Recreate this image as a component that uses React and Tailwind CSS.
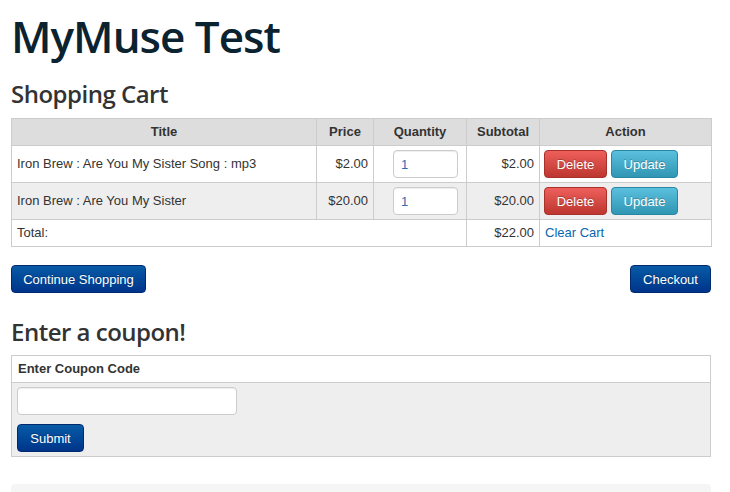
const ITEMS = [
  { title: 'Iron Brew : Are You My Sister Song : mp3', price: '$2.00', qty: '1', subtotal: '$2.00' },
  { title: 'Iron Brew : Are You My Sister', price: '$20.00', qty: '1', subtotal: '$20.00' },
]

const btn = 'h-[28px] rounded-[4px] border text-[13px] text-white leading-none whitespace-nowrap font-["Liberation_Sans",Arial,sans-serif] [text-shadow:0_-1px_0_rgba(0,0,0,0.25)]'
const primary = `${btn} bg-gradient-to-b from-[#0a5ba6] to-[#00348a] border-[#012a6e]`
const danger = `${btn} bg-gradient-to-b from-[#ee5f5b] to-[#bd362f] border-[#a8322b]`
const info = `${btn} bg-gradient-to-b from-[#5bc0de] to-[#2f96b4] border-[#2a87a3]`

const th = 'border border-[#cccccc] bg-[#dddddd] font-bold text-center h-[27px] px-[5px]'
const td = 'border border-[#cccccc] px-[5px]'
const heading = "font-['Open_Sans',sans-serif] font-semibold text-[24px] leading-[30px] tracking-[-0.5px] text-[#333333]"

export default function App() {
  return (
    <div className="w-[730px] bg-white px-[11px] font-['Liberation_Sans',Arial,sans-serif] text-[13px] text-[#333333]">
      <div className="w-[700px]">
        <h1 className="font-['Open_Sans',sans-serif] font-semibold text-[44px] leading-[50px] text-[#0b2230] pt-[11px] tracking-[-1px]">
          MyMuse Test
        </h1>
        <h2 className={`${heading} mt-[18px]`}>Shopping Cart</h2>

        <table className="w-[700px] mt-[9px] border-collapse table-fixed">
          <colgroup>
            <col className="w-[305px]" />
            <col className="w-[57px]" />
            <col className="w-[93px]" />
            <col className="w-[73px]" />
            <col className="w-[172px]" />
          </colgroup>
          <thead>
            <tr>
              <th className={th}>Title</th>
              <th className={th}>Price</th>
              <th className={th}>Quantity</th>
              <th className={th}>Subtotal</th>
              <th className={th}>Action</th>
            </tr>
          </thead>
          <tbody>
            {ITEMS.map((it, i) => (
              <tr key={i} className={i % 2 ? 'bg-[#eeeeee]' : 'bg-white'}>
                <td className={`${td} h-[37px]`}>{it.title}</td>
                <td className={`${td} text-right`}>{it.price}</td>
                <td className={`${td} pl-[19px]`}>
                  <input
                    defaultValue={it.qty}
                    className="block w-[65px] h-[28px] px-[7px] rounded-[4px] border border-[#cccccc] bg-white text-[13px] text-[#2a6fb0] shadow-[inset_0_1px_1px_rgba(0,0,0,0.075)] outline-none"
                  />
                </td>
                <td className={`${td} text-right`}>{it.subtotal}</td>
                <td className={`${td} pl-[4px] pr-[3px]`}>
                  <div className="flex gap-[4px]">
                    <button className={`${danger} w-[63px]`}>Delete</button>
                    <button className={`${info} w-[67px]`}>Update</button>
                  </div>
                </td>
              </tr>
            ))}
            <tr className="bg-white">
              <td className={`${td} h-[27px]`} colSpan={3}>Total:</td>
              <td className={`${td} text-right`}>$22.00</td>
              <td className={td}>
                <a className="text-[#0a66b0]">Clear Cart</a>
              </td>
            </tr>
          </tbody>
        </table>

        <div className="flex justify-between mt-[18px]">
          <button className={`${primary} w-[135px]`}>Continue Shopping</button>
          <button className={`${primary} w-[81px]`}>Checkout</button>
        </div>

        <h2 className={`${heading} mt-[24px]`}>Enter a coupon!</h2>

        <div className="mt-[8px] border border-[#cccccc]">
          <div className="h-[27px] px-[6px] flex items-center font-bold bg-white border-b border-[#cccccc]">
            Enter Coupon Code
          </div>
          <div className="bg-[#eeeeee] px-[5px] py-[4px]">
            <input className="block w-[220px] h-[28px] rounded-[4px] border border-[#cccccc] bg-white shadow-[inset_0_1px_1px_rgba(0,0,0,0.075)] outline-none" />
            <button className={`${primary} w-[67px] mt-[9px]`}>Submit</button>
          </div>
        </div>

        <div className="mt-[27px] h-[20px] rounded-t-[4px] bg-[#f5f5f5]" />
      </div>
    </div>
  )
}
